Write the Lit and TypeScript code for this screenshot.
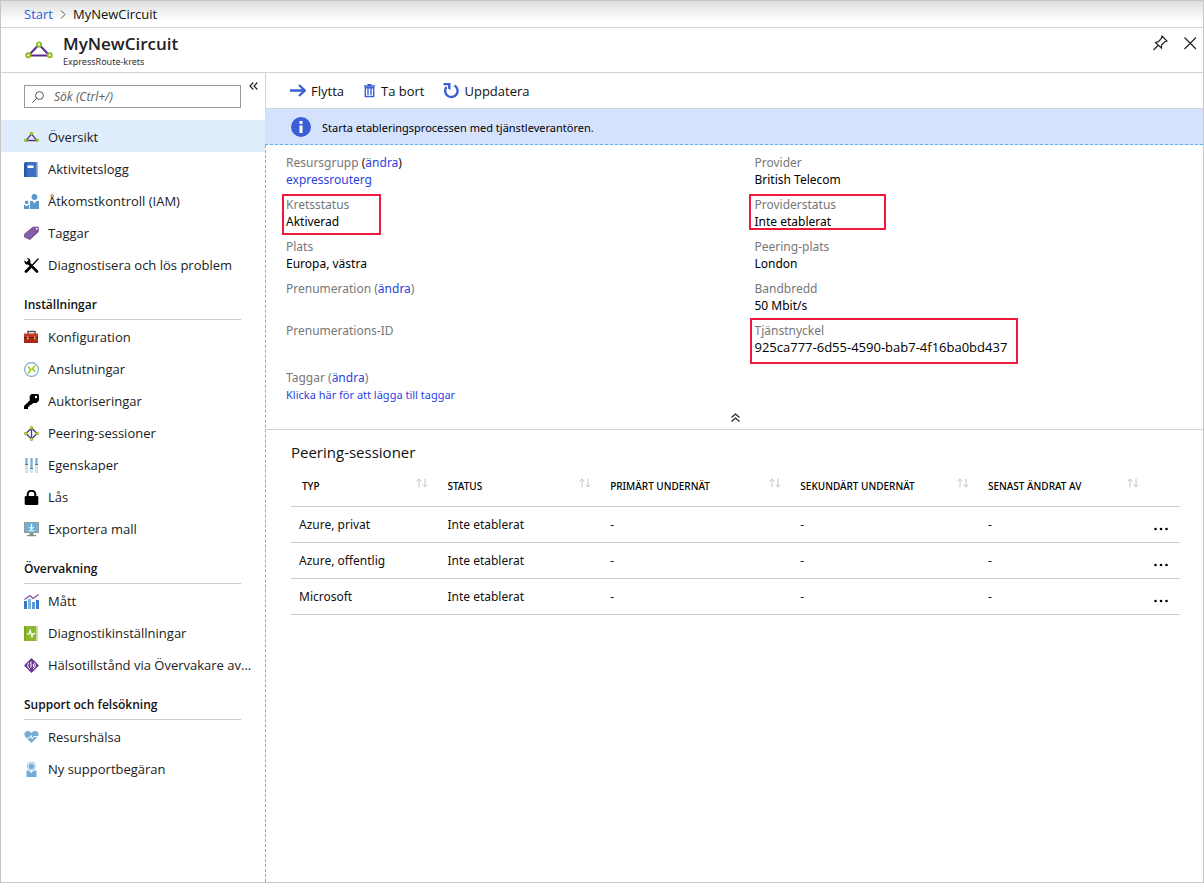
import { LitElement, html, css, svg, nothing } from "lit";
import { customElement, state } from "lit/decorators.js";
import { classMap } from "lit/directives/class-map.js";

const icons: Record<string, unknown> = {
  circuit: svg`<path d="M7.500 4 2 10.500H13Z" fill="none" stroke="#5c2d91" stroke-width="1.300"/><g fill="#fff" stroke="#8dbb21" stroke-width="1.400"><circle cx="7.500" cy="3.500" r="1.100"/><circle cx="1.800" cy="10.200" r="1.100"/><circle cx="13.200" cy="10.200" r="1.100"/></g>`,
  log: svg`<path d="M0 1.500 1.500 0H13.500V15H0Z" fill="#3f6fc4"/><path d="M0 1.500 1.500 0H2.500V15H0Z" fill="#2d56a5"/><path d="M12.500 0h1.200v14h-1.200z" fill="#a9bce0"/><path d="M3.500 3.500h6v2.500h-6z" fill="#fff"/>`,
  people: svg`<g fill="#5b98c9"><circle cx="10.500" cy="3" r="2.900"/><path d="M6 7h2.500l2 2.500 2-2.500H15v8H6Z"/><circle cx="2.600" cy="8.400" r="1.800"/><path d="M0 11h1.300l1.300 1.400L3.900 11H5.200v4H0Z"/></g>`,
  tag: svg`<path d="M9 .7 14 .5 15 2 14.500 6 6 14 0 11 .3 8Z" fill="#7a4f9c"/><path d="M.3 8 9 .7l3 4L5.500 13.500 0 11Z" fill="#865ea8"/><circle cx="12.700" cy="2.700" r="1" fill="#fff"/>`,
  tools: svg`<g fill="none" stroke="#000" stroke-linecap="round"><path d="M4 4.500 13 13.500" stroke-width="2.600"/><path d="M14 1 8.500 7" stroke-width="1.300"/><path d="M6.500 9 2 13.500" stroke-width="2.800"/></g><path d="M.4 2.200 2.500 4 4 3.500 4.300 1.800 2.600.3C5-.4 7 1.500 6.400 4.200L4.500 6.500C2 7 0 5.200.4 2.200Z"/>`,
  toolbox: svg`<path d="M4 4V1.500H11V4" fill="none" stroke="#555" stroke-width="1.500"/><rect y="3.500" width="14" height="4.500" fill="#c0392b"/><rect y="8" width="14" height="5" fill="#a52a1e"/><path d="M0 7.500H14" stroke="#6e1a12"/><path d="M3 6.500h1.500v3H3zM10 6.500h1.500v3h-1.500z" fill="#e9a13b"/>`,
  connect: svg`<circle cx="7.500" cy="7.500" r="6.900" fill="#fff" stroke="#6ea9da" stroke-width="1.100"/><path d="M4 4.500 6.700 7.700 4 11.500M11.200 3.500 8.300 7 11.200 9.500" fill="none" stroke="#a4cf2a" stroke-width="1.700"/>`,
  key: svg`<path d="M7.500 0H13.500Q15 0 15 1.500V6.500L12.500 9H9.300L7 11H5.500V12.700H4V15H0V12L5.700 6.500V2Z"/><circle cx="12" cy="3" r="1.200" fill="#fff"/>`,
  peering: svg`<path d="M7.500 2 2 7.500l5.500 5.500L13 7.500ZM7.500 2V13" fill="none" stroke="#5c2d91" stroke-width="1.300"/><g fill="#fff" stroke="#8dbb21" stroke-width="1.200"><circle cx="7.500" cy="1.700" r="1.100"/><circle cx="1.700" cy="7.500" r="1.100"/><circle cx="13.300" cy="7.500" r="1.100"/><circle cx="7.500" cy="13.300" r="1.100"/></g>`,
  sliders: svg`<path d="M1 0h3v15H1zM6 0h3v15H6zM11 0h3v15h-3z" fill="#cfe3f2"/><path d="M1.500 0h2v6h-2zM6.500 0h2v10h-2zM11.500 0h2v6h-2z" fill="#79b0d8"/><path d="M1 6.500h3M6 10.500h3M11 6.500h3" stroke="#6b7278"/>`,
  lock: svg`<rect x=".7" y="6" width="13.600" height="9" rx="1.200"/><path d="M3.700 7V4.500a3.800 3.800 0 0 1 7.600 0V7" fill="none" stroke="#000" stroke-width="2"/>`,
  export: svg`<rect width="15" height="11" fill="#999"/><rect x="1" y="1" width="13" height="9" fill="#6fb0de"/><path d="M5.500 11h4v2h-4zM3 13h9v1.300H3z" fill="#8a8a8a"/><path d="M7.500 2V7M5.500 5l2 2.200 2-2.200M5 8.700h5" fill="none" stroke="#fff" stroke-width="1.100"/>`,
  metrics: svg`<path d="M0 7h3v8H0zM12 6h3v9h-3z" fill="#3f76c4"/><path d="M4 5h3v10H4z" fill="#7ab6dc"/><path d="M8 8h3v7H8z" fill="#5a9ad0"/><path d="M.5 5.500 6 1.500 9 4.500 14.500.5" fill="none" stroke="#7a4f9c" stroke-width="1.200"/>`,
  diag: svg`<path d="M0 0H12.500V15H0Z" fill="#8ab82e"/><path d="M12.500 0h1.200v15h-1.200z" fill="#bcd68a"/><path d="M0 0h2v15H0z" fill="#7ca828"/><path d="M2.500 8H5l1.200-3.500L8 10.500 9 7.700h2.300" fill="none" stroke="#fff" stroke-width="1.200"/>`,
  health: svg`<path d="M7.500 0 15 7.500 7.500 15 0 7.500Z" fill="#68378f"/><path d="M5 4.500A4 4 0 0 0 6 11M10 4.500A4 4 0 0 1 9 11" fill="none" stroke="#fff"/><path d="M7 3.500v6M9.500 6v3" stroke="#fff" stroke-width="1.100"/>`,
  heart: svg`<path d="M7.500 13 1.500 7C-1 4 1 1 3.800 1 5.700 1 7 2.200 7.500 3.300 8 2.200 9.300 1 11.200 1 14 1 16 4 13.500 7Z" fill="#73acd8"/><path d="M3 8H5.500L7 5.500 8.300 9 9.800 6.500H14" fill="none" stroke="#fff" stroke-width="1"/>`,
  support: svg`<circle cx="7.300" cy="4" r="3.900" fill="none" stroke="#73acd8" stroke-width=".8"/><circle cx="7.300" cy="4.300" r="2.700" fill="#73acd8"/><path d="M2.500 8.500H5L7.300 11 9.600 8.500h2.900V15h-10Z" fill="#73acd8"/>`,
};

interface Item { icon: string; label: string; active?: boolean }
interface Section { title?: string; items: Item[] }

const sections: Section[] = [
  {
    items: [
      { icon: "circuit", label: "Översikt", active: true },
      { icon: "log", label: "Aktivitetslogg" },
      { icon: "people", label: "Åtkomstkontroll (IAM)" },
      { icon: "tag", label: "Taggar" },
      { icon: "tools", label: "Diagnostisera och lös problem" },
    ],
  },
  {
    title: "Inställningar",
    items: [
      { icon: "toolbox", label: "Konfiguration" },
      { icon: "connect", label: "Anslutningar" },
      { icon: "key", label: "Auktoriseringar" },
      { icon: "peering", label: "Peering-sessioner" },
      { icon: "sliders", label: "Egenskaper" },
      { icon: "lock", label: "Lås" },
      { icon: "export", label: "Exportera mall" },
    ],
  },
  {
    title: "Övervakning",
    items: [
      { icon: "metrics", label: "Mått" },
      { icon: "diag", label: "Diagnostikinställningar" },
      { icon: "health", label: "Hälsotillstånd via Övervakare av..." },
    ],
  },
  {
    title: "Support och felsökning",
    items: [
      { icon: "heart", label: "Resurshälsa" },
      { icon: "support", label: "Ny supportbegäran" },
    ],
  },
];

interface Fact { label: string; change?: boolean; darkParens?: boolean; value?: string; link?: boolean; size?: string; mark?: string }

const leftFacts: Fact[] = [
  { label: "Resursgrupp", change: true, darkParens: true, value: "expressrouterg", link: true },
  { label: "Kretsstatus", value: "Aktiverad", mark: "short" },
  { label: "Plats", value: "Europa, västra" },
  { label: "Prenumeration", change: true },
  { label: "Prenumerations-ID" },
  { label: "Taggar", change: true, value: "Klicka här för att lägga till taggar", link: true, size: "small" },
];
const rightFacts: Fact[] = [
  { label: "Provider", value: "British Telecom" },
  { label: "Providerstatus", value: "Inte etablerat", mark: "medium" },
  { label: "Peering-plats", value: "London" },
  { label: "Bandbredd", value: "50 Mbit/s" },
  { label: "Tjänstnyckel", value: "925ca777-6d55-4590-bab7-4f16ba0bd437", size: "code", mark: "long" },
];

const columns = ["TYP", "STATUS", "PRIMÄRT UNDERNÄT", "SEKUNDÄRT UNDERNÄT", "SENAST ÄNDRAT AV"];
const rows = ["Azure, privat", "Azure, offentlig", "Microsoft"];

@customElement("app-root")
export class AppRoot extends LitElement {
  @state() private expanded = true;

  static styles = css`
    :host {
      display: block;
      font-family: "Open Sans", "Noto Sans", sans-serif;
      font-size: 13px;
      line-height: 17px;
      color: #111;
    }
    * { box-sizing: border-box; }
    a { color: #2b3fe0; text-decoration: none; }
    button { font: inherit; color: inherit; background: none; border: 0; padding: 0; cursor: pointer; }
    svg { display: block; flex: none; }
    h1, h2, p, ul, dl, dd { margin: 0; padding: 0; font-weight: 400; }
    ul { list-style: none; }

    .frame { display: flex; flex-direction: column; min-height: 100vh; border: 1px solid #c6c6c6; background: #fff; }
    .crumbs {
      display: flex; align-items: center; gap: 7px; height: 27px; padding: 0 23px;
      border-bottom: 1px solid #d2d2d2; background: linear-gradient(#dedede, #fff 20px);
    }
    .crumbs a { color: #2660d8; }
    .head { display: flex; align-items: flex-start; height: 45px; padding: 6px 6px 0 24px; border-bottom: 1px solid #d2d2d2; }
    .head .logo { margin: 7px 10px 0 0; }
    .titles { flex: 1; }
    h1 { font-size: 17px; line-height: 20px; font-weight: 600; color: #222; }
    .titles p { font: 9px/15px "Noto Sans", sans-serif; color: #333; }
    .head .tools { display: flex; gap: 16px; padding-top: 1px; }

    .body { display: flex; flex: 1; }
    .side { width: 264px; flex: none; }
    .search { display: flex; align-items: flex-start; padding: 12px 7px 12px 23px; gap: 8px; }
    .search button { margin-top: -3px; }
    .box { display: flex; flex: 1; align-items: center; gap: 10px; height: 23px; padding: 0 7px; border: 1px solid #999; }
    .box input { flex: 1; min-width: 0; border: 0; padding: 0; outline: 0; background: none; font: italic 12px/17px "Noto Sans", sans-serif; color: #555; }
    .box input::placeholder { color: #666; opacity: 1; }
    .item { display: flex; align-items: center; gap: 9px; height: 32px; padding: 2px 0 0 23px; color: #1b1b1b; white-space: nowrap; }
    .item.active { background: #e0edfd; }
    .side h2 { height: 40px; margin: 0 24px 0 23px; padding-top: 16px; border-bottom: 1px solid #ccc; font-size: 12px; font-weight: 600; }

    .main { display: flex; flex-direction: column; flex: 1; min-width: 0; }
    .bar { display: flex; align-items: center; gap: 19px; height: 36px; padding: 1px 24px 0; border-bottom: 1px solid #d2d2d2; border-left: 1px solid #d2d2d2; }
    .bar button { display: flex; align-items: center; gap: 5px; }
    .banner { display: flex; align-items: center; gap: 11px; height: 36px; padding: 1px 26px 0; background: #d5e2fd; border-bottom: 1px dashed #5db2ec; font-family: "Noto Sans", sans-serif; font-size: 11px; color: #000; }
    .content { flex: 1; border-left: 1px dashed #6db3e8; }
    .facts { display: grid; grid-template-columns: 1fr 1fr; column-gap: 20px; padding: 9px 0 0 20px; font-family: "Noto Sans", sans-serif; font-size: 12px; }
    .fact { position: relative; min-height: 34px; margin-bottom: 8px; }
    .fact dt { color: #777; }
    .fact dd { color: #000; }
    .fact .small { font-size: 11px; }
    .fact .code { font-family: "Open Sans", sans-serif; font-size: 13px; }
    .fact .dark { color: #111; }
    .fact:nth-child(6) { padding-top: 5px; }
    .mark { position: absolute; top: -2px; left: -4px; border: 2px solid #ee1a3b; pointer-events: none; }
    .short { width: 99px; height: 41px; }
    .medium { left: -6px; width: 137px; height: 36px; }
    .long { top: -4px; left: -5px; width: 268px; height: 46px; }
    .collapse { display: flex; justify-content: center; width: 100%; padding: 2px 0 7px 2px; border-bottom: 1px solid #d2d2d2; }
    .peer { padding: 11px 23px 0 25px; }
    .peer h2 { font-size: 15px; line-height: 22px; color: #111; }
    table { width: 100%; table-layout: fixed; border-collapse: collapse; font-family: "Noto Sans", sans-serif; font-size: 12px; }
    th, td { height: 36px; padding: 1px 11px 0 8px; text-align: left; border-bottom: 1px solid #ccc; white-space: nowrap; }
    th { height: 43px; padding-top: 5px; font-size: 10px; font-weight: 500; color: #000; }
    th:first-child { padding-left: 11px; }
    th button { display: flex; width: 100%; justify-content: space-between; align-items: flex-start; }
    td button { display: flex; align-items: center; height: 20px; margin-top: 9px; }
    .c0 { width: 16.7%; } .c1 { width: 18.3%; } .c2 { width: 21.4%; } .c3 { width: 21.1%; } .c4 { width: 19.1%; } .c5 { width: 3.4%; }
    .c5 { padding: 0 0 0 3px; }
  `;

  private icon(name: string) {
    return html`<svg width="15" height="15" viewBox="0 0 15 15" aria-hidden="true">${icons[name]}</svg>`;
  }

  private fact(f: Fact) {
    return html`<div class="fact">
      <dt>${f.label}${f.change ? html` <span class=${classMap({ dark: !!f.darkParens })}>(<a href="#">ändra</a>)</span>` : nothing}</dt>
      ${f.value ? html`<dd class=${f.size ?? "normal"}>${f.link ? html`<a href="#">${f.value}</a>` : f.value}</dd>` : nothing}
      ${f.mark ? html`<span class="mark ${f.mark}"></span>` : nothing}
    </div>`;
  }

  render() {
    return html`<div class="frame">
      <nav class="crumbs">
        <a href="#">Start</a>
        <svg width="6" height="9" viewBox="0 0 6 9"><path d="M1 .5 5 4.500 1 8.500" fill="none" stroke="#555"/></svg>
        <span>MyNewCircuit</span>
      </nav>
      <header class="head">
        <svg class="logo" width="28" height="18" viewBox="0 0 28 18">
          <path d="M14 3.500 3.500 14.500H24.500Z" fill="none" stroke="#5c2d91" stroke-width="2"/>
          <g fill="#fff" stroke="#8dbb21" stroke-width="1.900"><circle cx="14" cy="3.500" r="2.100"/><circle cx="3.300" cy="14.300" r="2.100"/><circle cx="24.700" cy="14.300" r="2.100"/></g>
        </svg>
        <div class="titles"><h1>MyNewCircuit</h1><p>ExpressRoute-krets</p></div>
        <div class="tools">
          <button aria-label="Fäst"><svg width="15" height="16" viewBox="0 0 15 16"><path d="M.5 15 5 10.500M2.500 7.500 8.500 13.200 8.500 10 11.500 7 14 6 9 1 8.300 3.500 5.500 6.700Z" fill="none" stroke="#222" stroke-width="1.200"/></svg></button>
          <button aria-label="Stäng"><svg width="13" height="16" viewBox="0 0 13 16"><path d="M.5 2.500 12 14M12 2.500.5 14" stroke="#222" stroke-width="1.200"/></svg></button>
        </div>
      </header>
      <div class="body">
        <aside class="side">
          <div class="search">
            <label class="box">
              <svg width="12" height="12" viewBox="0 0 12 12"><circle cx="7.500" cy="4.500" r="3.900" fill="none" stroke="#555"/><path d="M4.700 7.300.5 11.500" stroke="#555"/></svg>
              <input type="text" aria-label="Sök" placeholder="Sök (Ctrl+/)" />
            </label>
            <button aria-label="Dölj meny"><svg width="9" height="8" viewBox="0 0 9 8"><path d="M4.300.500 1 4l3.300 3.500M8.300.500 5 4l3.300 3.500" fill="none" stroke="#222" stroke-width="1.200"/></svg></button>
          </div>
          ${sections.map((s) => html`
            ${s.title ? html`<h2>${s.title}</h2>` : nothing}
            <ul>${s.items.map((i) => html`<li><a href="#" class=${classMap({ item: true, active: !!i.active })}>${this.icon(i.icon)}<span>${i.label}</span></a></li>`)}</ul>
          `)}
        </aside>
        <main class="main">
          <div class="bar">
            <button><svg width="16" height="14" viewBox="0 0 16 14"><path d="M0 6.500H15M9 1 14.800 6.500 9 12" fill="none" stroke="#3a5fd6" stroke-width="2.300"/></svg>Flytta</button>
            <button><svg width="13" height="14" viewBox="0 0 13 14"><path d="M1 2H12M4.500 .7h4M2.300 3.800V12.500h8.400V3.800ZM5 4v7M8 4v7" fill="none" stroke="#3a5fd6" stroke-width="1.400"/></svg>Ta bort</button>
            <button><svg width="16" height="16" viewBox="0 0 16 16"><path d="M11.500 2.500A6.200 6.200 0 1 1 3.500 4" fill="none" stroke="#3a5fd6" stroke-width="2.400"/><path d="M.5 0H7.500V7L5 5.500V2.300H.5Z" fill="#3a5fd6"/></svg>Uppdatera</button>
          </div>
          <div class="banner">
            <svg width="20" height="20" viewBox="0 0 20 20"><circle cx="10" cy="10" r="10" fill="#3a5fd6"/><rect x="8.500" y="4" width="3" height="3" fill="#fff"/><rect x="8.500" y="8.500" width="3" height="7.500" fill="#fff"/></svg>
            <span>Starta etableringsprocessen med tjänstleverantören.</span>
          </div>
          <div class="content">
            ${this.expanded ? html`<div class="facts">
              <dl>${leftFacts.map((f) => this.fact(f))}</dl>
              <dl>${rightFacts.map((f) => this.fact(f))}</dl>
            </div>` : nothing}
            <button class="collapse" aria-label="Visa mindre" @click=${() => (this.expanded = !this.expanded)}>
              <svg width="9" height="9" viewBox="0 0 9 9"><path d="M.5 4.500 4.500 1l4 3.500M.5 8.500 4.500 5l4 3.500" fill="none" stroke="#222" stroke-width="1.200"/></svg>
            </button>
            <section class="peer">
              <h2>Peering-sessioner</h2>
              <table>
                <thead><tr>
                  ${columns.map((c, n) => html`<th class="c${n}"><button>${c}<svg width="12" height="10" viewBox="0 0 12 10"><path d="M3 9.500V1M.5 3.500 3 1l2.500 2.500M9 .5V9M6.500 6.500 9 9l2.500-2.500" fill="none" stroke="#c4c4c4"/></svg></button></th>`)}
                  <th class="c5"></th>
                </tr></thead>
                <tbody>
                  ${rows.map((r) => html`<tr><td>${r}</td><td>Inte etablerat</td><td>-</td><td>-</td><td>-</td>
                    <td class="c5"><button aria-label="Fler åtgärder"><svg width="16" height="4" viewBox="0 0 16 4"><circle cx="2.500" cy="2" r="1.300"/><circle cx="8" cy="2" r="1.300"/><circle cx="13.500" cy="2" r="1.300"/></svg></button></td></tr>`)}
                </tbody>
              </table>
            </section>
          </div>
        </main>
      </div>
    </div>`;
  }
}
